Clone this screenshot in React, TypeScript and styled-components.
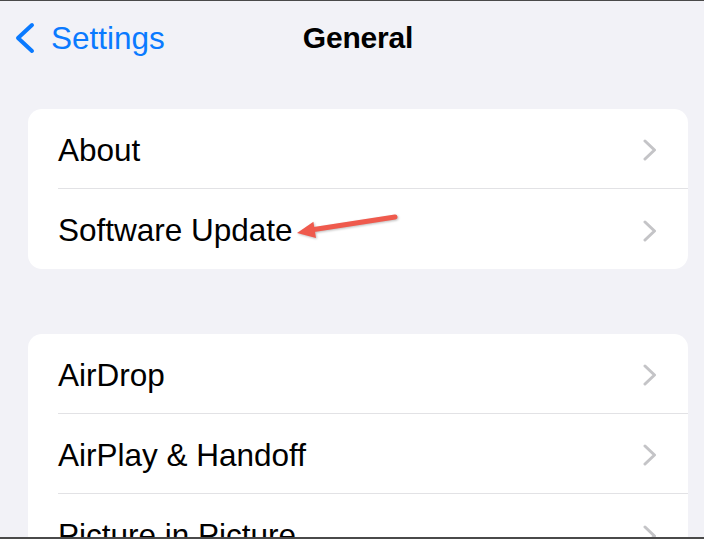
import React from "react";
import styled, { createGlobalStyle } from "styled-components";

const GlobalStyle = createGlobalStyle`
  html, body {
    margin: 0;
    padding: 0;
    background: #f2f2f7;
  }
  * {
    box-sizing: border-box;
  }
`;

const Screen = styled.div`
  position: relative;
  width: 704px;
  height: 539px;
  overflow: hidden;
  background: #f2f2f7;
  border-top: 1px solid #4a4a4a;
  border-bottom: 2px solid #4a4a4a;
  font-family: "Liberation Sans", Arial, sans-serif;
`;

const NavBar = styled.div`
  display: grid;
  grid-template-columns: 1fr auto 1fr;
  align-items: center;
  height: 72px;
  padding: 0 13px;
`;

const BackButton = styled.div`
  display: flex;
  align-items: center;
  gap: 14px;
  color: #0a7aff;
  font-size: 31.5px;
  padding-top: 2px;
`;

const Title = styled.div`
  font-size: 30px;
  font-weight: 700;
  color: #000;
  padding: 2px 0 0 12px;
  letter-spacing: -0.2px;
`;

const Content = styled.div`
  display: flex;
  flex-direction: column;
  gap: 65px;
  padding: 36px 16px 0 28px;
`;

const Card = styled.div`
  background: #fff;
  border-radius: 14px;
  overflow: hidden;
`;

const Row = styled.div<{ $last?: boolean }>`
  display: flex;
  align-items: center;
  justify-content: space-between;
  height: 80px;
  margin-left: 30px;
  padding: 3px 31px 0 0;
  border-bottom: ${(p) => (p.$last ? "none" : "1px solid #e2e2e5")};
`;

const Label = styled.span`
  font-size: 31.5px;
  color: #000;
`;

const Pointer = styled.svg`
  position: absolute;
  left: 290px;
  top: 205px;
  filter: drop-shadow(1px 1px 1px rgba(0, 0, 0, 0.25));
`;

const BackChevron = () => (
  <svg width="24" height="32" viewBox="0 0 24 32">
    <path
      d="M19 3 L5 16 L19 29"
      fill="none"
      stroke="#0a7aff"
      strokeWidth="4"
      strokeLinecap="round"
      strokeLinejoin="round"
    />
  </svg>
);

const Chevron = () => (
  <svg width="14" height="22" viewBox="0 0 14 22">
    <path
      d="M2 2 L11.5 11 L2 20"
      fill="none"
      stroke="#c4c4c7"
      strokeWidth="3"
      strokeLinecap="round"
      strokeLinejoin="round"
    />
  </svg>
);

const Item = ({ label, last }: { label: string; last?: boolean }) => (
  <Row $last={last}>
    <Label>{label}</Label>
    <Chevron />
  </Row>
);

export default function App() {
  return (
    <>
      <GlobalStyle />
      <Screen>
        <NavBar>
          <BackButton>
            <BackChevron />
            Settings
          </BackButton>
          <Title>General</Title>
          <div />
        </NavBar>
        <Content>
          <Card>
            <Item label="About" />
            <Item label="Software Update" last />
          </Card>
          <Card>
            <Item label="AirDrop" />
            <Item label="AirPlay & Handoff" />
            <Item label="Picture in Picture" last />
          </Card>
        </Content>
        <Pointer width="112" height="42" viewBox="0 0 112 42">
          <path
            d="M24 23.5 L105 11"
            stroke="#ef5a4d"
            strokeWidth="5"
            strokeLinecap="round"
            fill="none"
          />
          <polygon points="7,27 23.4,15.8 26,32" fill="#ef5a4d" />
        </Pointer>
      </Screen>
    </>
  );
}
